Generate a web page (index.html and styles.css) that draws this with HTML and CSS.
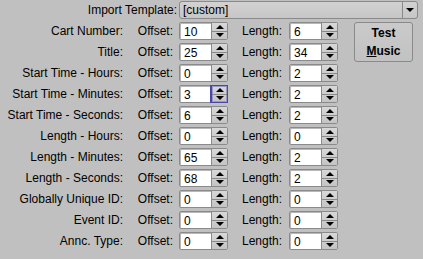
FILE: index.html
```html
<!DOCTYPE html>
<html>
<head>
<meta charset="utf-8">
<link rel="stylesheet" href="styles.css">
</head>
<body>
<div class="panel">
  <div class="top">
    <span class="toplabel">Import Template:</span>
    <div class="combo"><span class="combo-text">[custom]</span><span class="combo-btn"><i class="tri down"></i></span></div>
  </div>
  <div class="grid">
    <span class="lbl">Cart Number:</span><span class="sub">Offset:</span>
    <div class="spin"><span class="val">10</span><span class="arrows"><b class="up"><i class="tri upt"></i></b><b class="dn"><i class="tri down"></i></b></span></div>
    <span class="sub2">Length:</span>
    <div class="spin"><span class="val">6</span><span class="arrows"><b class="up"><i class="tri upt"></i></b><b class="dn"><i class="tri down"></i></b></span></div>
    <div class="btn"><span>Test</span><span><u>M</u>usic</span></div>

    <span class="lbl">Title:</span><span class="sub">Offset:</span>
    <div class="spin"><span class="val">25</span><span class="arrows"><b class="up"><i class="tri upt"></i></b><b class="dn"><i class="tri down"></i></b></span></div>
    <span class="sub2">Length:</span>
    <div class="spin"><span class="val">34</span><span class="arrows"><b class="up"><i class="tri upt"></i></b><b class="dn"><i class="tri down"></i></b></span></div>

    <span class="lbl">Start Time - Hours:</span><span class="sub">Offset:</span>
    <div class="spin"><span class="val">0</span><span class="arrows"><b class="up"><i class="tri upt"></i></b><b class="dn"><i class="tri down"></i></b></span></div>
    <span class="sub2">Length:</span>
    <div class="spin"><span class="val">2</span><span class="arrows"><b class="up"><i class="tri upt"></i></b><b class="dn"><i class="tri down"></i></b></span></div>

    <span class="lbl">Start Time - Minutes:</span><span class="sub">Offset:</span>
    <div class="spin"><span class="val">3</span><span class="arrows focus"><b class="up"><i class="tri upt"></i></b><b class="dn"><i class="tri down"></i></b></span></div>
    <span class="sub2">Length:</span>
    <div class="spin"><span class="val">2</span><span class="arrows"><b class="up"><i class="tri upt"></i></b><b class="dn"><i class="tri down"></i></b></span></div>

    <span class="lbl">Start Time - Seconds:</span><span class="sub">Offset:</span>
    <div class="spin"><span class="val">6</span><span class="arrows"><b class="up"><i class="tri upt"></i></b><b class="dn"><i class="tri down"></i></b></span></div>
    <span class="sub2">Length:</span>
    <div class="spin"><span class="val">2</span><span class="arrows"><b class="up"><i class="tri upt"></i></b><b class="dn"><i class="tri down"></i></b></span></div>

    <span class="lbl">Length - Hours:</span><span class="sub">Offset:</span>
    <div class="spin"><span class="val">0</span><span class="arrows"><b class="up"><i class="tri upt"></i></b><b class="dn"><i class="tri down"></i></b></span></div>
    <span class="sub2">Length:</span>
    <div class="spin"><span class="val">0</span><span class="arrows"><b class="up"><i class="tri upt"></i></b><b class="dn"><i class="tri down"></i></b></span></div>

    <span class="lbl">Length - Minutes:</span><span class="sub">Offset:</span>
    <div class="spin"><span class="val">65</span><span class="arrows"><b class="up"><i class="tri upt"></i></b><b class="dn"><i class="tri down"></i></b></span></div>
    <span class="sub2">Length:</span>
    <div class="spin"><span class="val">2</span><span class="arrows"><b class="up"><i class="tri upt"></i></b><b class="dn"><i class="tri down"></i></b></span></div>

    <span class="lbl">Length - Seconds:</span><span class="sub">Offset:</span>
    <div class="spin"><span class="val">68</span><span class="arrows"><b class="up"><i class="tri upt"></i></b><b class="dn"><i class="tri down"></i></b></span></div>
    <span class="sub2">Length:</span>
    <div class="spin"><span class="val">2</span><span class="arrows"><b class="up"><i class="tri upt"></i></b><b class="dn"><i class="tri down"></i></b></span></div>

    <span class="lbl">Globally Unique ID:</span><span class="sub">Offset:</span>
    <div class="spin"><span class="val">0</span><span class="arrows"><b class="up"><i class="tri upt"></i></b><b class="dn"><i class="tri down"></i></b></span></div>
    <span class="sub2">Length:</span>
    <div class="spin"><span class="val">0</span><span class="arrows"><b class="up"><i class="tri upt"></i></b><b class="dn"><i class="tri down"></i></b></span></div>

    <span class="lbl">Event ID:</span><span class="sub">Offset:</span>
    <div class="spin"><span class="val">0</span><span class="arrows"><b class="up"><i class="tri upt"></i></b><b class="dn"><i class="tri down"></i></b></span></div>
    <span class="sub2">Length:</span>
    <div class="spin"><span class="val">0</span><span class="arrows"><b class="up"><i class="tri upt"></i></b><b class="dn"><i class="tri down"></i></b></span></div>

    <span class="lbl">Annc. Type:</span><span class="sub">Offset:</span>
    <div class="spin"><span class="val">0</span><span class="arrows"><b class="up"><i class="tri upt"></i></b><b class="dn"><i class="tri down"></i></b></span></div>
    <span class="sub2">Length:</span>
    <div class="spin"><span class="val">0</span><span class="arrows"><b class="up"><i class="tri upt"></i></b><b class="dn"><i class="tri down"></i></b></span></div>
  </div>
</div>
</body>
</html>
```
FILE: styles.css
```css
html, body {
  margin: 0;
  padding: 0;
  background: #c0c0c0;
}
body {
  font-family: "Liberation Sans", Arial, sans-serif;
  font-size: 12px;
  color: #000;
  width: 423px;
  height: 259px;
  overflow: hidden;
}
.panel {
  padding-top: 1px;
}
.top {
  display: flex;
  align-items: center;
  height: 18px;
}
.toplabel {
  width: 177px;
  text-align: right;
  margin-right: 2px;
}
.combo {
  box-sizing: border-box;
  width: 239px;
  height: 18px;
  border: 1px solid #8a8a8a;
  border-radius: 3px;
  background: linear-gradient(#d2d2d2, #c6c6c6);
  display: flex;
  align-items: center;
}
.combo-text {
  flex: 1;
  padding-left: 3px;
}
.combo-btn {
  width: 14px;
  height: 100%;
  border-left: 1px solid #8a8a8a;
  display: flex;
  align-items: center;
  justify-content: center;
}
.grid {
  display: grid;
  grid-template-columns: 123px 56px 49px 61px 49px 75px;
  grid-auto-rows: 18px;
  row-gap: 3px;
  margin-top: 3px;
  align-items: center;
}
.lbl {
  grid-column: 1;
  text-align: right;
  white-space: nowrap;
}
.sub {
  text-align: right;
  padding-right: 6px;
}
.sub2 {
  text-align: right;
  padding-right: 7px;
}
.spin {
  box-sizing: border-box;
  height: 18px;
  display: flex;
  border: 1px solid #8a8a8a;
  border-radius: 2px;
  background: #fff;
  box-shadow: inset 1px 1px 0 #b8b8b8;
}
.val {
  flex: 1;
  padding-left: 4px;
  line-height: 17px;
  padding-top: 1px;
}
.arrows {
  box-sizing: border-box;
  width: 16px;
  display: flex;
  flex-direction: column;
  border-left: 1px solid #8a8a8a;
  background: linear-gradient(#d8d8d8, #c4c4c4);
}
.arrows.focus {
  border-left-color: #4848a8;
  outline: 1px solid #4848a8;
  outline-offset: 0;
  box-shadow: inset 0 0 0 1px #9898cc;
}
.arrows b {
  flex: 1;
  display: flex;
  align-items: center;
  justify-content: center;
}
.arrows b.up {
  border-bottom: 1px solid #8a8a8a;
}
.tri {
  display: block;
  width: 0;
  height: 0;
  border-left: 4px solid transparent;
  border-right: 4px solid transparent;
}
.tri.upt {
  border-bottom: 4px solid #000;
}
.tri.down {
  border-top: 4px solid #000;
}
.btn {
  grid-column: 6;
  grid-row: 1 / span 2;
  align-self: stretch;
  margin-left: 16px;
  width: 59px;
  box-sizing: border-box;
  border: 1px solid #8a8a8a;
  border-radius: 3px;
  background: linear-gradient(#cacaca, #c2c2c2);
  display: flex;
  flex-direction: column;
  align-items: center;
  justify-content: center;
  font-weight: bold;
  line-height: 18px;
  margin-bottom: -1px;
}
.btn u {
  text-decoration-thickness: 1px;
}
```
